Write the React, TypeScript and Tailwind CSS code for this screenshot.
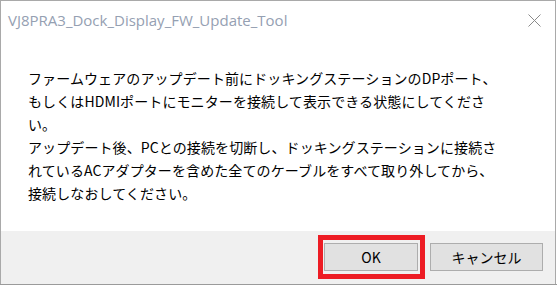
import React from "react";

export default function App() {
  const jp = { fontFamily: '"Noto Sans CJK JP", "Noto Sans", sans-serif' };
  return (
    <div className="w-[557px] h-[285px] bg-white relative overflow-hidden">
      <div className="w-[556px] h-[284px] border-l border-t border-r border-[#a9a9a9] flex flex-col">
        <div className="h-[39px] flex items-center justify-between pl-[7px] pr-[14px]">
          <span
            className="text-[15px] text-[#95a0b2] leading-none"
            style={{ fontFamily: '"Open Sans", "Noto Sans", sans-serif' }}
          >
            VJ8PRA3_Dock_Display_FW_Update_Tool
          </span>
          <svg width="13" height="13" viewBox="0 0 13 13" className="mt-[-1px]">
            <path d="M0.5 0.5 L12.5 12.5 M12.5 0.5 L0.5 12.5" stroke="#8a8a8a" strokeWidth="1" fill="none" />
          </svg>
        </div>
        <div className="flex-1 bg-white pl-[27px] pt-[27px]">
          <p className="text-[14px] leading-[23px] tracking-[0.1px] text-black whitespace-nowrap" style={jp}>
            ファームウェアのアップデート前にドッキングステーションのDPポート、
            <br />
            もしくはHDMIポートにモニターを接続して表示できる状態にしてくださ
            <br />
            い。
            <br />
            アップデート後、PCとの接続を切断し、ドッキングステーションに接続さ
            <br />
            れているACアダプターを含めた全てのケーブルをすべて取り外してから、
            <br />
            接続しなおしてください。
          </p>
        </div>
        <div className="h-[53px] bg-[#f0f0f0] flex justify-end items-start pt-[12px] pr-[12px] gap-[12px]">
          <div className="relative">
            <button
              className="w-[94px] h-[28px] bg-[#e1e1e1] border border-[#adadad] text-[14px] text-black flex items-center justify-center"
              style={jp}
            >
              OK
            </button>
            <span className="absolute left-[-6px] right-[-7px] top-[-8px] bottom-[-8px] border-[5px] border-[#ed1c24] pointer-events-none" />
          </div>
          <button
            className="w-[113px] h-[28px] bg-[#e1e1e1] border border-[#adadad] text-[14px] text-black flex items-center justify-center"
            style={jp}
          >
            キャンセル
          </button>
        </div>
      </div>
      <div className="absolute left-0 bottom-0 w-[557px] h-[1px] bg-[#9a9a9a]" />
    </div>
  );
}
